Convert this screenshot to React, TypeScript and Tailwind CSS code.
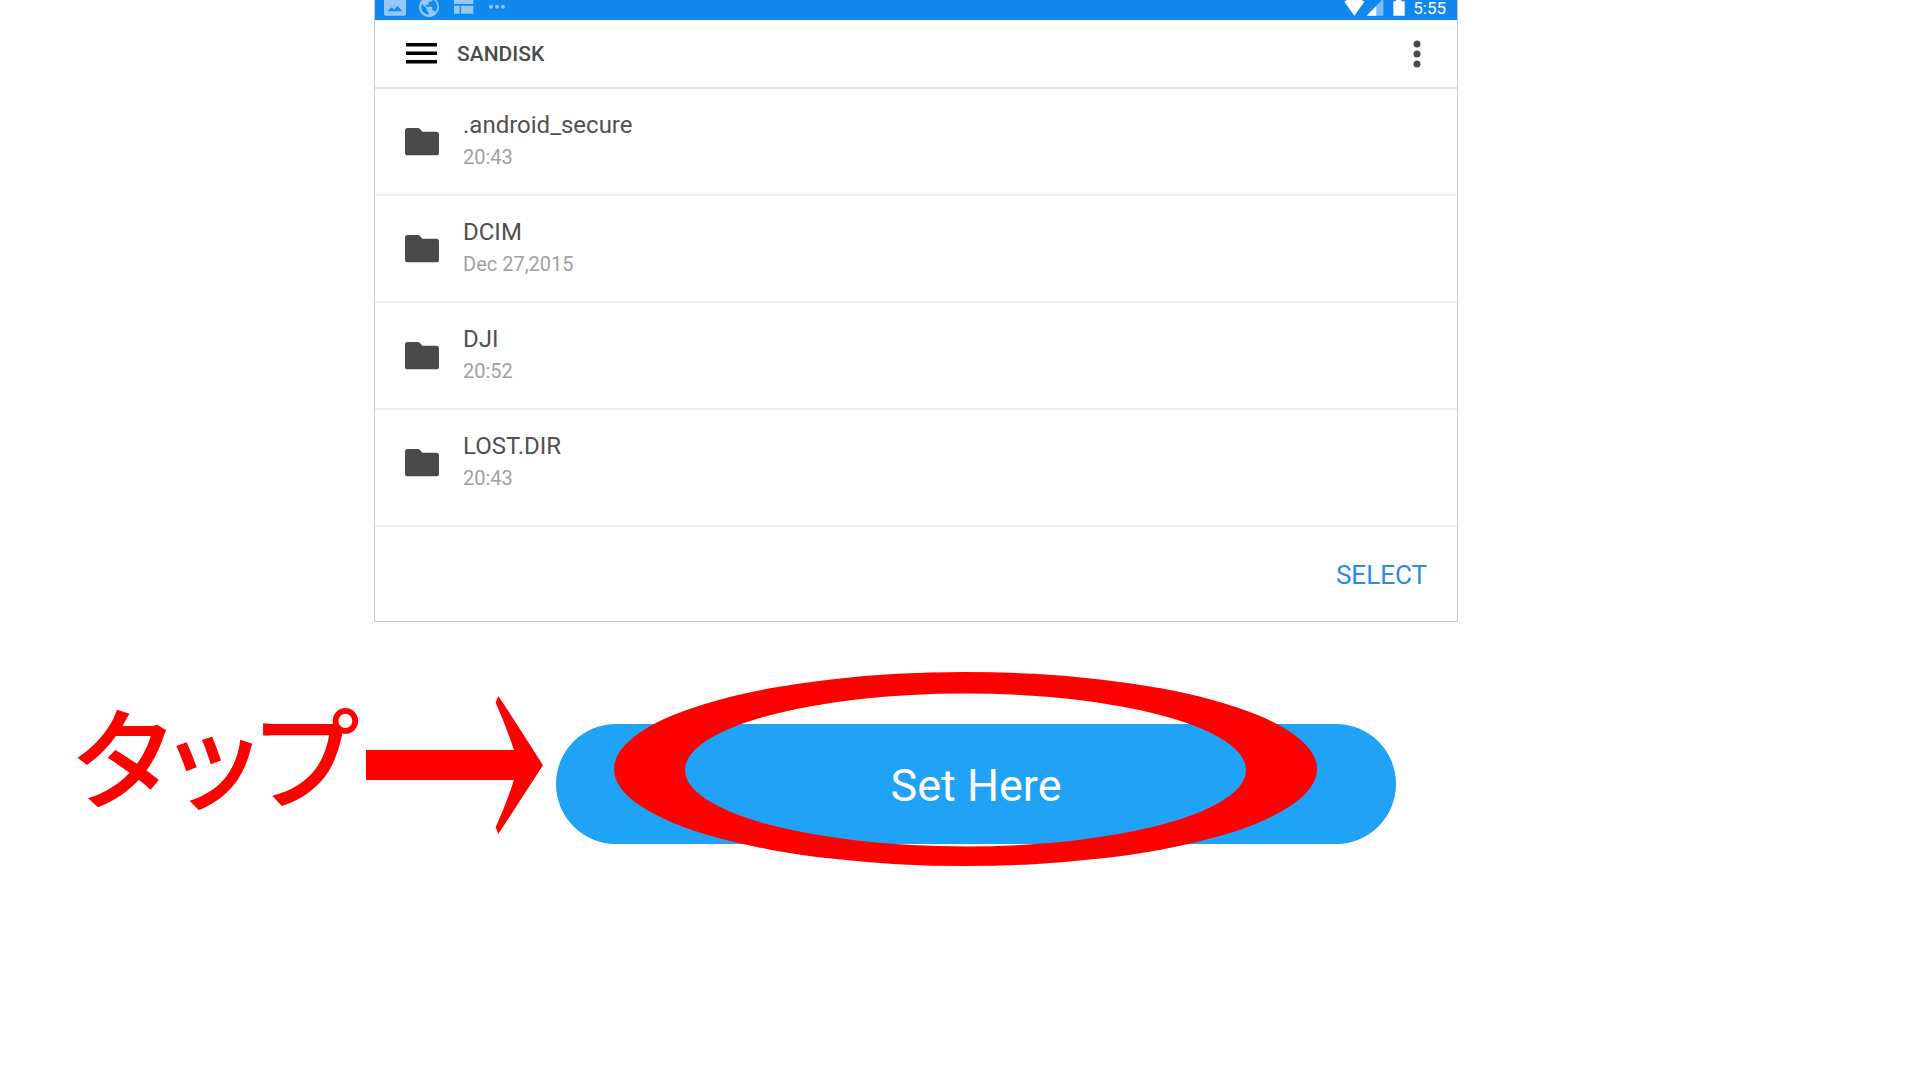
const folders = [
  { name: '.android_secure', date: '20:43' },
  { name: 'DCIM', date: 'Dec 27,2015' },
  { name: 'DJI', date: '20:52' },
  { name: 'LOST.DIR', date: '20:43' },
];

function StatusBar() {
  return (
    <div className="flex h-5 items-start justify-between bg-[#1188f0] pr-[11px] pl-2 text-[#93c8f8]">
      <div className="flex gap-[11px]">
        <svg className="h-5 w-6" viewBox="0 0 72 60" fill="currentColor" aria-hidden="true">
          <path fillRule="evenodd" d="M3 -10H67Q69 -10 69 -8V42Q69 47 64 47H8Q3 47 3 42ZM14 34H58L43 17L33 29L26 22Z" />
        </svg>
        <svg className="h-5 w-6" viewBox="0 0 72 60" fill="currentColor" aria-hidden="true">
          <path fillRule="evenodd" d="M33 -9A30 30 0 1 1 32.900 -9ZM12 12L26 26V30Q26 36 32 36V44Q9 40 10 20ZM53 37Q51 31 46 31H43V23Q43 20 40 20H23V14H29Q32 14 32 11V5H38Q44 5 44 -1V-3Q66 12 53 37Z" />
        </svg>
        <svg className="h-5 w-6" viewBox="0 0 72 60" fill="currentColor" aria-hidden="true">
          <path d="M3 -5H61V12H3ZM3 17H20V41H3ZM24 17H61V41H24Z" />
        </svg>
        <svg className="h-5 w-6" viewBox="0 0 72 60" fill="currentColor" aria-hidden="true">
          <circle cx="9" cy="20" r="6" />
          <circle cx="27" cy="20" r="6" />
          <circle cx="45" cy="20" r="6" />
        </svg>
      </div>
      <div className="flex items-start gap-[5px] text-white">
        <svg className="h-5 w-[65px]" viewBox="0 0 195 60" fill="currentColor" aria-hidden="true">
          <path d="M4 5Q32 -16 64 5L34 47Z" />
          <path d="M121 -4V47H71Z" opacity="0.45" />
          <path d="M100 18V47H71Z" />
          <path d="M151 4H159V0H175V4H185V47H151Z" />
        </svg>
        <span className="text-[17px] leading-4">5:55</span>
      </div>
    </div>
  );
}

function FolderIcon() {
  return (
    <svg className="h-7 w-[34px] shrink-0" viewBox="0 0 102 84" fill="#4a4a4a" aria-hidden="true">
      <path d="M8 0H38Q42 0 45 3L52 11H94Q102 11 102 19V74Q102 82 94 82H8Q0 82 0 74V8Q0 0 8 0Z" />
    </svg>
  );
}

function FileBrowser() {
  return (
    <section className="border-x border-b border-[#c8c8c8]">
      <StatusBar />
      <header className="flex h-[69px] items-center justify-between border-b-2 border-[#e2e2e2] pr-[33px] pl-[31px]">
        <div className="flex items-center gap-5">
          <button type="button" aria-label="Menu">
            <svg className="h-[22px] w-[31px]" viewBox="0 0 31 22" fill="#000" aria-hidden="true">
              <rect width="31" height="3.500" />
              <rect y="8.500" width="31" height="3.500" />
              <rect y="17" width="31" height="3.500" />
            </svg>
          </button>
          <h1 className="text-[21px] leading-7 font-medium text-[#4a4a4a]">SANDISK</h1>
        </div>
        <button type="button" aria-label="More options">
          <svg className="h-7 w-[14px]" viewBox="0 0 14 28" fill="#4a4a4a" aria-hidden="true">
            <circle cx="7" cy="4" r="3.500" />
            <circle cx="7" cy="14" r="3.500" />
            <circle cx="7" cy="24" r="3.500" />
          </svg>
        </button>
      </header>
      <ul className="pb-2">
        {folders.map((f) => (
          <li key={f.name} className="flex h-[107px] items-center gap-6 border-b-2 border-[#eeeeee] pl-[30px] last:border-transparent">
            <FolderIcon />
            <div className="pb-0.5">
              <p className="text-[24px] leading-8 text-[#505050]">{f.name}</p>
              <p className="text-[20px] leading-8 text-[#a0a0a0]">{f.date}</p>
            </div>
          </li>
        ))}
      </ul>
      <footer className="flex h-24 items-center justify-end border-t-2 border-[#eeeeee] pr-[30px]">
        <button type="button" className="pt-0.5 text-[26px] leading-8 text-[#2a8be6]">SELECT</button>
      </footer>
    </section>
  );
}

export default function App() {
  return (
    <main className="min-h-screen bg-white font-[Roboto,'Noto_Sans_CJK_JP',sans-serif]">
      <div className="pr-[462px] pl-[374px]">
        <FileBrowser />
      </div>
      <div className="flex items-center pt-16 pr-[524px] pl-[74px]">
        <p className="mb-6 w-[292px] shrink-0 font-['Noto_Sans_CJK_JP',sans-serif] text-[110px] leading-[120px] font-medium whitespace-nowrap text-[#ff0000] [font-feature-settings:'palt']">タップ</p>
        <svg className="h-[138px] w-[177px] shrink-0" viewBox="0 0 531 414" fill="#ff0000" aria-hidden="true">
          <path d="M0 162H444Q420 90 389 20L397 0Q462 98 531 208Q462 314 397 414L389 394Q420 325 444 252H0Z" />
        </svg>
        <div className="relative mt-[38px] ml-[13px] flex-1">
          <button type="button" className="h-[120px] w-full rounded-full bg-[#20a2f7] pt-1 text-[45px] leading-[60px] text-white">Set Here</button>
          <svg
            className="pointer-events-none absolute -top-[52px] left-[58px] h-[194px] w-[calc(100%-137px)]"
            viewBox="0 0 703 194"
            preserveAspectRatio="none"
            fill="#ff0000"
            aria-hidden="true"
          >
            <path fillRule="evenodd" d="M0 97A351.500 97 0 0 1 703 97A351.500 97 0 0 1 0 97ZM71 98A280.500 76.500 0 0 0 632 98A280.500 76.500 0 0 0 71 98Z" />
          </svg>
        </div>
      </div>
    </main>
  );
}
